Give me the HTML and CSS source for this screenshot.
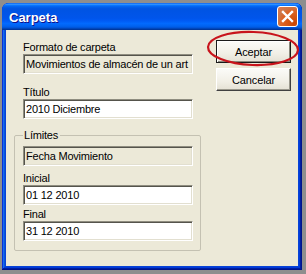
FILE: index.html
```html
<!DOCTYPE html>
<html lang="es">
<head>
<meta charset="utf-8">
<title>Carpeta</title>
<link rel="stylesheet" href="styles.css">
</head>
<body>
<div class="window">
  <div class="titlebar">
    <span class="title">Carpeta</span>
    <button class="close" aria-label="Cerrar">
      <svg width="21" height="21" viewBox="0 0 21 21"><path d="M6 6 L15 15 M15 6 L6 15" stroke="#fff" stroke-width="2.4" stroke-linecap="square" fill="none"/></svg>
    </button>
  </div>
  <div class="client">
    <div class="form">
      <label class="lbl first">Formato de carpeta</label>
      <div class="field ro">Movimientos de almacén de un art</div>
      <label class="lbl second">Título</label>
      <div class="field">2010 Diciembre</div>
      <fieldset class="group">
        <legend>Límites</legend>
        <div class="field ro g1">Fecha Movimiento</div>
        <label class="lbl g2">Inicial</label>
        <div class="field">01 12 2010</div>
        <label class="lbl g3">Final</label>
        <div class="field">31 12 2010</div>
      </fieldset>
    </div>
    <div class="buttons">
      <button class="btn default">Aceptar</button>
      <button class="btn">Cancelar</button>
    </div>
  </div>
  <svg class="mark" width="96" height="40" viewBox="0 0 96 40"><ellipse cx="48" cy="19.5" rx="45" ry="16.5" fill="none" stroke="#c8141c" stroke-width="2.2" transform="rotate(2 48 19.5)"/></svg>
</div>
</body>
</html>
```

FILE: styles.css
```css
html, body {
  margin: 0;
  padding: 0;
}
body {
  background: #8e8e8e;
  font-family: "Liberation Sans", Arial, sans-serif;
  font-size: 11px;
  color: #000;
}
.window {
  position: relative;
  margin: 3px 0 0 2px;
  width: 300px;
  height: 267px;
  display: flex;
  flex-direction: column;
  background: #0842d6;
  border-radius: 7px 7px 0 0;
  box-shadow: inset -1px -1px #00138c, inset 1px 1px #0831d9, inset -2px -2px #001ea0, inset 2px 2px #166aee, inset -3px -3px #003bda, inset 3px 3px #0855dd;
}
.titlebar {
  height: 27px;
  flex: none;
  display: flex;
  align-items: center;
  justify-content: space-between;
  padding: 0 4px 0 7px;
  border-radius: 7px 7px 0 0;
  background: linear-gradient(180deg, #0058ee 0%, #3593ff 4%, #288eff 6%, #127dff 8%, #036ffc 10%, #0262ee 14%, #0057e5 20%, #0054e3 24%, #0055eb 56%, #005bf5 66%, #026afe 76%, #0062ef 86%, #0052d6 92%, #0040ab 96%, #003092 100%);
}
.title {
  color: #fff;
  font-weight: bold;
  font-size: 13px;
  letter-spacing: 0;
  text-shadow: 1px 1px #0f1089;
  padding-top: 1px;
}
.close {
  width: 21px;
  height: 21px;
  padding: 0;
  margin: 0;
  border: 1px solid #fff;
  border-radius: 3px;
  background: radial-gradient(circle at 85% 85%, #cc4600 0%, #dc6527 55%, #cd7546 70%, #e27b4f 100%);
  display: flex;
  align-items: center;
  justify-content: center;
}
.close svg {
  display: block;
  margin: -1px;
}
.client {
  flex: 1;
  margin: 0 4px 4px 4px;
  background: #ece9d8;
  display: flex;
  align-items: flex-start;
}
.form {
  margin-left: 8px;
  width: 187px;
  padding-top: 10px;
}
.lbl {
  display: block;
  height: 14px;
  line-height: 14px;
  letter-spacing: -0.2px;
  white-space: nowrap;
}
.form > .lbl,
.form > .field {
  margin-left: 9px;
}
.lbl.second { margin-top: 11px; }
.lbl.g2 { margin-top: 5px; }
.lbl.g3 { margin-top: 2px; }
.field {
  box-sizing: border-box;
  width: 170px;
  height: 20px;
  padding: 1px 2px;
  line-height: 16px;
  letter-spacing: -0.2px;
  white-space: nowrap;
  overflow: hidden;
  background: #fff;
  border: 1px solid;
  border-color: #8f8d80 #fff #fff #8f8d80;
  box-shadow: inset 1px 1px #55544c, inset -1px -1px #e2dfd0;
}
.field.ro {
  background: #ece9d8;
}
.field.g1 { margin-top: 4px; }
.group {
  margin: 9px 0 0 0;
  padding: 0 7px 9px 8px;
  border: 2px groove #e4e1d3;
  border-width: 1px;
  border-style: solid;
  border-color: #c4c1b2;
  border-radius: 2px;
  min-width: 0;
  box-sizing: border-box;
  width: 187px;
}
.group legend {
  padding: 0 2px 0 1px;
  margin: 0;
  line-height: 14px;
  letter-spacing: -0.2px;
}
.buttons {
  margin-left: 15px;
  padding-top: 10px;
  display: flex;
  flex-direction: column;
  gap: 5px;
}
.btn {
  box-sizing: border-box;
  width: 75px;
  height: 23px;
  margin: 0;
  padding: 0;
  font-family: "Liberation Sans", Arial, sans-serif;
  font-size: 11px;
  letter-spacing: -0.1px;
  color: #000;
  background: linear-gradient(180deg, #fbfbf8 0%, #f1efe6 60%, #e4e1d4 100%);
  border: 1px solid;
  border-color: #fff #404040 #404040 #fff;
  box-shadow: inset -1px -1px #9a988c;
}
.btn.default {
  border: 1px solid #1a1a1a;
  box-shadow: inset 1px 1px #fff, inset -1px -1px #8a887c;
}
.mark {
  position: absolute;
  left: 203px;
  top: 26px;
  pointer-events: none;
}
```
